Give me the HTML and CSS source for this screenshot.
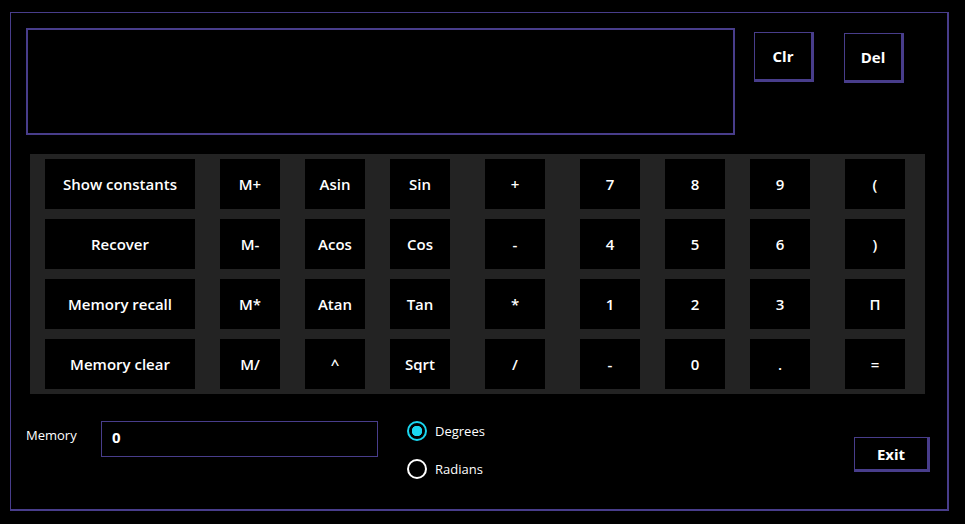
FILE: index.html
```html
<!DOCTYPE html>
<html>
<head>
<meta charset="utf-8">
<link rel="stylesheet" href="styles.css">
</head>
<body>
<div class="frame">
  <div class="top">
    <div class="display"></div>
    <button class="tbtn clr">Clr</button>
    <button class="tbtn del">Del</button>
  </div>
  <div class="pad">
    <button class="key wide">Show constants</button>
    <button class="key">M+</button>
    <button class="key">Asin</button>
    <button class="key">Sin</button>
    <button class="key">+</button>
    <button class="key">7</button>
    <button class="key">8</button>
    <button class="key">9</button>
    <button class="key">(</button>

    <button class="key wide">Recover</button>
    <button class="key">M-</button>
    <button class="key">Acos</button>
    <button class="key">Cos</button>
    <button class="key">-</button>
    <button class="key">4</button>
    <button class="key">5</button>
    <button class="key">6</button>
    <button class="key">)</button>

    <button class="key wide">Memory recall</button>
    <button class="key">M*</button>
    <button class="key">Atan</button>
    <button class="key">Tan</button>
    <button class="key">*</button>
    <button class="key">1</button>
    <button class="key">2</button>
    <button class="key">3</button>
    <button class="key">Π</button>

    <button class="key wide">Memory clear</button>
    <button class="key">M/</button>
    <button class="key">^</button>
    <button class="key">Sqrt</button>
    <button class="key">/</button>
    <button class="key">-</button>
    <button class="key">0</button>
    <button class="key">.</button>
    <button class="key">=</button>
  </div>
  <div class="bottom">
    <div class="mem-label">Memory</div>
    <div class="mem-box">0</div>
    <div class="radios">
      <div class="radio on"><span class="dot"></span><span>Degrees</span></div>
      <div class="radio"><span class="dot"></span><span>Radians</span></div>
    </div>
    <button class="tbtn exit">Exit</button>
  </div>
</div>
</body>
</html>
```
FILE: styles.css
```css
html, body {
  margin: 0;
  padding: 0;
  background: #000;
  width: 965px;
  height: 524px;
  overflow: hidden;
  font-family: "Open Sans", "Noto Sans", sans-serif;
  color: #fff;
}

.frame {
  box-sizing: border-box;
  margin: 12px 0 0 10px;
  width: 939px;
  height: 499px;
  border-style: solid;
  border-color: #483d8b;
  border-width: 1px 2px 2px 1px;
  padding: 15px 0 0 15px;
}

.top {
  display: flex;
  align-items: flex-start;
}

.display {
  box-sizing: border-box;
  width: 709px;
  height: 107px;
  border: 2px solid #483d8b;
}

button {
  font-family: inherit;
  color: #fff;
  background: #000;
  padding: 0;
  margin: 0;
  cursor: default;
}

.tbtn {
  box-sizing: border-box;
  width: 60px;
  height: 50px;
  border-style: solid;
  border-color: #483d8b;
  border-width: 1px 3px 3px 1px;
  font-size: 15px;
  font-weight: 700;
}

.clr {
  margin: 4px 0 0 19px;
}

.del {
  margin: 5px 0 0 30px;
}

.pad {
  box-sizing: border-box;
  margin: 19px 0 0 4px;
  width: 895px;
  height: 240px;
  background: #232323;
  padding: 5px 0 0 15px;
  display: grid;
  grid-template-columns: 175px 85px 85px 95px 95px 85px 85px 95px 60px;
  grid-auto-rows: 50px;
  row-gap: 10px;
}

.key {
  width: 60px;
  height: 50px;
  border: none;
  background: #000;
  font-size: 15px;
  font-weight: 600;
}

.key.wide {
  width: 150px;
}

.bottom {
  display: flex;
  align-items: flex-start;
}

.mem-label {
  width: 75px;
  margin-top: 33px;
  font-size: 13px;
  line-height: 16px;
}

.mem-box {
  box-sizing: border-box;
  width: 277px;
  height: 36px;
  margin-top: 27px;
  border: 1px solid #483d8b;
  padding: 0 0 0 10px;
  font-size: 15px;
  font-weight: 700;
  line-height: 30px;
}

.radios {
  margin: 27px 0 0 29px;
  display: flex;
  flex-direction: column;
  gap: 18px;
}

.radio {
  display: flex;
  align-items: center;
  height: 20px;
  font-size: 13px;
  gap: 8px;
}

.dot {
  box-sizing: border-box;
  width: 20px;
  height: 20px;
  border-radius: 50%;
  border: 2px solid #fff;
}

.radio.on .dot {
  border-color: #1ad7f0;
  background: radial-gradient(circle, #1ad7f0 0 5px, #000 5.5px);
}

.exit {
  width: 76px;
  height: 35px;
  margin: 43px 17px 0 auto;
}
```
